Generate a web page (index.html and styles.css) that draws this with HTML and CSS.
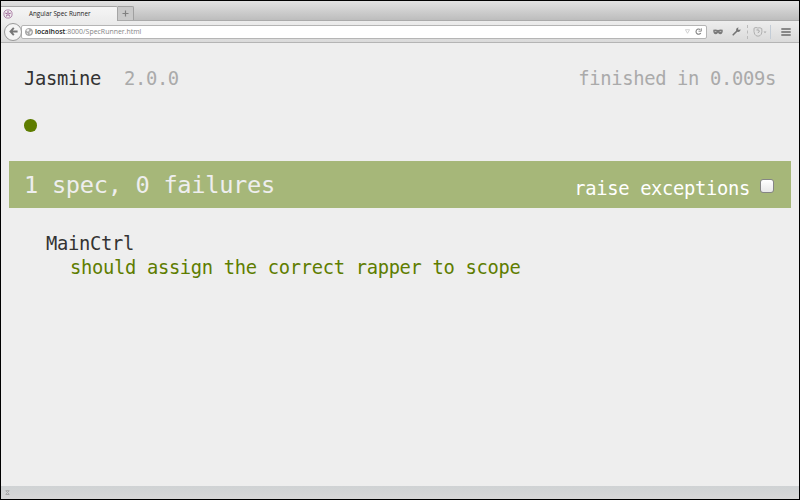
FILE: index.html
```html
<!DOCTYPE html>
<html lang="en">
<head>
<meta charset="utf-8">
<title>Angular Spec Runner</title>
<link rel="stylesheet" href="styles.css">
</head>
<body>
<div class="window">
  <header class="tabs">
    <div class="tab">
      <svg class="favicon" width="10" height="10" viewBox="0 0 10 10" fill="none" stroke="#a06a9a"><circle cx="5" cy="5" r="4.1" stroke-width=".8"/><path d="M5 5V2M5 5l2.8-.9M5 5l1.8 2.4M5 5L3.2 7.4M5 5l-2.8-.9" stroke-width="1.1"/><circle cx="5" cy="5" r=".9" fill="#eee" stroke-width=".5"/></svg>
      <span class="tab-title">Angular Spec Runner</span>
    </div>
    <div class="new-tab"><svg width="7" height="7" viewBox="0 0 7 7" stroke="#808080" stroke-width="1.2"><path d="M3.5 .5v6M.5 3.5h6"/></svg></div>
  </header>
  <nav class="toolbar">
    <div class="back"><svg width="9" height="9" viewBox="0 0 9 9" fill="none" stroke="#757575" stroke-width="1.9"><path d="M4.8 .9L1.5 4.5l3.3 3.6M1.8 4.5h6.8"/></svg></div>
    <div class="address">
      <svg class="globe" width="8" height="8" viewBox="0 0 8 8"><circle cx="4" cy="4" r="3.6" fill="#aaa" stroke="#999" stroke-width=".7"/><path d="M1.2 2l2-1 1.3.8-.8 1.4-1.2.5zM4.5 3.7l2.3-.5-.5 2-1.5 1.5zM1 4.5l1.8.7.3 1.5z" fill="#f4f4f4"/></svg>
      <span class="url"><b>localhost</b>:8000/SpecRunner.html</span>
      <svg class="drop" width="5" height="5" viewBox="0 0 5 5" fill="none" stroke="#c2c2c2" stroke-width=".7"><path d="M.4 .7h4.2L2.5 4.3z"/></svg>
      <svg class="reload" width="7" height="7" viewBox="0 0 7 7" fill="none" stroke="#808080" stroke-width="1.1"><path d="M5.3 1.6A2.6 2.6 0 1 0 5.8 5"/><path d="M6.3 .3v2.9H3.5" stroke-width=".9"/></svg>
    </div>
    <svg class="mask" width="10" height="6" viewBox="0 0 10 6"><path d="M.3.8Q2.5 0 5 .9 7.5 0 9.7.8v2.1Q9 5.5 7 5.3 5.7 5 5 3.7 4.3 5 3 5.3 1 5.5.3 2.9z" fill="#7a7a7a"/><path d="M1.7 2.5h1.7M6.6 2.5h1.7" stroke="#bbb"/></svg>
    <svg class="wrench" width="9" height="9" viewBox="0 0 9 9"><path d="M1.2 7.8L5.5 3.5" stroke="#757575" stroke-width="1.6" stroke-linecap="round"/><path d="M6.7.5L5.9 2.1l1 1L8.5 2.3Q8.8 4.5 6.7 4.9L5 4.6 4.1 3.6Q3.9.7 6.7.5z" fill="#757575"/></svg>
    <span class="divider"></span>
    <svg class="shield" width="14" height="10" viewBox="0 0 14 10" fill="none" stroke="#b0b0b0"><path d="M1 1.2Q3-.2 4.8 1 7 .2 8.8 1.6 9.7 9 5 9.2.3 9 1 1.2z" fill="#e2e2e2"/><path d="M3.5 3q2.6-.8 2.8 1.2Q6.2 5.4 4.8 5.7" stroke="#a5a5a5"/><path d="M10.5 4.5h3L12 6.2z" fill="#aaa" stroke="none"/></svg>
    <span class="divider cool"></span>
    <svg class="menu" width="10" height="8" viewBox="0 0 10 8" stroke="#6a6a6a" stroke-width="1.6"><path d="M.3 1h9.4M.3 4h9.4M.3 7h9.4"/></svg>
  </nav>
  <main class="report">
    <div class="banner">
      <span class="name">Jasmine</span><span class="version">2.0.0</span>
      <span class="duration">finished in 0.009s</span>
    </div>
    <div class="symbols"><i class="passed"></i></div>
    <div class="bar">
      <span class="result">1 spec, 0 failures</span>
      <label class="raise">raise exceptions<input class="check" type="checkbox"></label>
    </div>
    <div class="suite">MainCtrl</div>
    <div class="spec">should assign the correct rapper to scope</div>
  </main>
  <footer class="status"><svg width="5" height="5" viewBox="0 0 5 5" fill="none" stroke="#aaa"><path d="M.5 .7h4M.5 4.5h4M1 1l3 3M4 1L1 4"/></svg></footer>
</div>
</body>
</html>
```
FILE: styles.css
```css
* { box-sizing: border-box; }
body { margin: 0; background: #000; }
svg { display: block; flex: none; }
.window {
  width: 800px; height: 500px;
  border: 1px solid #000;
  background: #eee;
  display: flex; flex-direction: column;
  overflow: hidden;
}
.tabs {
  height: 20px; flex: none;
  display: flex; align-items: flex-end;
  background: linear-gradient(#e2e2e2, #bdbdbd);
  border-bottom: 1px solid #aaa;
}
.tab {
  width: 117px; height: 15px;
  margin-bottom: -1px;
  padding-left: 2px;
  display: flex; align-items: center;
  background: linear-gradient(#f5f5f5, #ececec);
  border: 1px solid #a5a5a5; border-width: 1px 1px 0 0;
  border-radius: 0 2px 0 0;
}
.tab-title {
  margin-left: 16px;
  font: 6.3px/10px "Open Sans", sans-serif;
  color: #222; white-space: nowrap;
}
.new-tab {
  width: 16px; height: 14px;
  display: flex; align-items: center; justify-content: center;
  background: #c9c9c9;
  border: 1px solid #a0a0a0; border-width: 1px 1px 0 0;
  border-radius: 0 2px 0 0;
}
.toolbar {
  height: 22px; flex: none;
  display: flex; align-items: center;
  padding: 0 8px 0 3px;
  background: linear-gradient(#ededed, #dadada);
  border-bottom: 1px solid #b4b4b4;
}
.back {
  width: 18px; height: 18px; flex: none;
  display: flex; align-items: center; justify-content: center;
  border: 1px solid #999; border-radius: 50%;
  background: #f4f4f4;
  z-index: 1;
}
.address {
  width: 686px; height: 14px; flex: none;
  margin-left: -1px;
  padding: 0 4px 0 3px;
  display: flex; align-items: center;
  background: #fff;
  border: 1px solid #b5b5b5; border-radius: 2px;
}
.url {
  margin-left: 2px; flex: 1;
  padding-top: 1px;
  font: 6.95px/10px "Open Sans", sans-serif;
  color: #858585; white-space: nowrap;
}
.url b { font-weight: 600; color: #222; }
.reload { margin-left: 5px; }
.mask { margin-left: 6px; }
.wrench { margin-left: 9px; }
.divider { height: 14px; margin-left: 6px; border-left: 1px dashed #bbb; }
.cool { margin-left: 3px; border-left: 1px solid #c3ccd6; }
.shield { margin-left: 5px; }
.menu { margin-left: auto; }
.report {
  flex: 1;
  padding: 23px 8px 0;
  font: 18.8px/24px "DejaVu Sans Mono", monospace;
  letter-spacing: -.32px;
  color: #333;
}
.banner { height: 24px; padding: 1px 15px 0; display: flex; }
.version { margin-left: 23px; color: #aaa; }
.duration { margin-left: auto; color: #aaa; }
.symbols { height: 71px; padding: 29px 15px 0; }
.passed { display: block; width: 12.5px; height: 12.5px; border-radius: 50%; background: #5e7d00; }
.bar {
  height: 47px;
  padding: 0 17px 0 15px;
  display: flex; align-items: center; justify-content: space-between;
  background: #a6b779;
  color: #fff;
}
.result { font-size: 23.7px; line-height: 46px; padding-top: 1px; color: #eee; }
.raise { display: flex; align-items: center; padding-top: 9px; }
.check {
  appearance: none;
  width: 14px; height: 14px;
  margin: -6px 0 0 10px;
  border: 1px solid #858585; border-radius: 3px;
  background: linear-gradient(#fff, #e8e8e8);
}
.suite { margin: 24px 0 0 37px; }
.spec { margin-left: 61px; color: #5e7d00; }
.status {
  height: 13px; flex: none;
  padding: 4px 0 0 4px;
  background: linear-gradient(#cfd2d4, #d8d8d8);
}
```
